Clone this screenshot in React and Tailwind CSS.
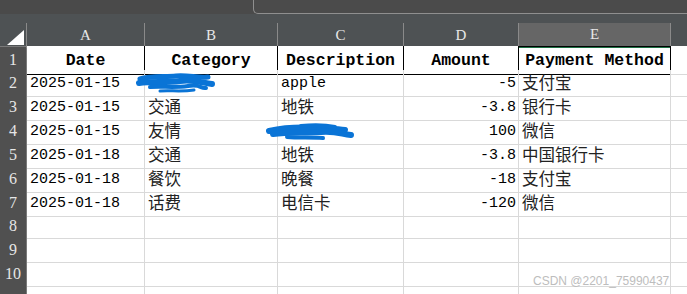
import React from 'react'

const cols = ['A', 'B', 'C', 'D', 'E']
const heads = ['Date', 'Category', 'Description', 'Amount', 'Payment Method']

const rows = [
  ['2025-01-15', '', 'apple', '-5', '支付宝'],
  ['2025-01-15', '交通', '地铁', '-3.8', '银行卡'],
  ['2025-01-15', '友情', '', '100', '微信'],
  ['2025-01-18', '交通', '地铁', '-3.8', '中国银行卡'],
  ['2025-01-18', '餐饮', '晚餐', '-18', '支付宝'],
  ['2025-01-18', '话费', '电信卡', '-120', '微信'],
]

const mono = 'font-["Liberation_Mono","Noto_Sans_CJK_SC",monospace]'
const cjk = 'font-["Noto_Sans_CJK_SC",sans-serif]'
const gridCols = 'grid grid-cols-[27px_118px_133px_126px_115px_152px_1fr]'
const rowHead = "flex items-center justify-center border-r border-b border-[#7a7a7a] bg-[#505050] font-['Liberation_Serif',serif] text-[16px] text-[#e6e6e6]"

function Scribble1() {
  return (
    <svg className="absolute left-[-9px] top-[2px]" width="80" height="22" viewBox="0 0 80 22">
      <g stroke="#0a74d6" fill="none" strokeLinecap="round" strokeLinejoin="round">
        <path d="M4 7 C14 4 28 5 40 4 S62 6 72 5" strokeWidth="5" />
        <path d="M3 11 C16 9 30 11 44 9 S66 11 76 12" strokeWidth="6" />
        <path d="M14 15 C26 14 38 16 52 14 S64 17 70 16" strokeWidth="4" />
        <path d="M24 19 C34 18 44 20 58 18" strokeWidth="3" />
      </g>
    </svg>
  )
}

function Scribble2() {
  return (
    <svg className="absolute left-[-13px] top-[3px]" width="90" height="20" viewBox="0 0 90 20">
      <g stroke="#0a74d6" fill="none" strokeLinecap="round" strokeLinejoin="round">
        <path d="M4 10 C18 7 34 6 50 7 S72 8 80 9" strokeWidth="6" />
        <path d="M8 13 C22 11 40 12 56 11 S76 13 86 14" strokeWidth="6" />
        <path d="M22 16 C34 17 46 16 58 17" strokeWidth="4" />
        <path d="M36 5 C48 4 60 4 70 6" strokeWidth="4" />
      </g>
    </svg>
  )
}

function isCjk(s) {
  return /[\u4e00-\u9fff]/.test(s)
}

export default function App() {
  const extraRows = [8, 9, 10, '']
  return (
    <div className="relative h-[294px] w-[687px] overflow-hidden bg-white">
      {/* title strip */}
      <div className="flex h-[14px] bg-[#4a4a4a]">
        <div className="w-[253px]" />
        <div className="flex-1 rounded-bl-[5px] border-b border-l border-[#8f8f8f] bg-[#4b4b4b]" />
      </div>
      <div className="h-[9px] bg-[#4e5254]" />

      {/* column letters */}
      <div className={`${gridCols} h-[23px] bg-[#4e5254] font-["Liberation_Serif",serif] text-[15px] text-[#e8e8e8]`}>
        <div className="relative border-r border-[#8a8a8a]">
          <div className="absolute right-[2px] bottom-[3px] h-0 w-0 border-b-[15px] border-l-[17px] border-b-white border-l-transparent" />
        </div>
        {cols.map(c => (
          <div
            key={c}
            className={`flex items-center justify-center border-r border-[#8a8a8a] ${c === 'E' ? 'bg-[#666666] border-b-2 border-b-[#1e7145]' : ''}`}
          >
            {c}
          </div>
        ))}
        <div />
      </div>

      {/* header row 1 */}
      <div className={`${gridCols} h-6`}>
        <div className={`${rowHead} border-t`}>1</div>
        {heads.map((h, i) => (
          <div
            key={h}
            className={`flex items-center justify-center border-r border-b border-black pt-[2px] ${i === 4 ? 'border-t' : ''} ${mono} text-[16.5px] font-bold text-black`}
          >
            {h}
          </div>
        ))}
        <div className="border-b border-[#d9d9d9]" />
      </div>

      {rows.map((r, ri) => (
        <div key={ri} className={`${gridCols} h-6`}>
          <div className={rowHead}>{ri + 2}</div>
          {r.map((v, ci) => (
            <div
              key={ci}
              className={`relative flex items-center overflow-visible whitespace-nowrap border-r border-b border-[#d9d9d9] ${ci === 3 ? 'justify-end pr-[2px]' : 'pl-[3px]'} ${isCjk(v) ? `${cjk} text-[16.5px] text-[#222]` : `${mono} pt-[3px] text-[15px] text-black`}`}
            >
              {v}
              {ri === 0 && ci === 1 && <Scribble1 />}
              {ri === 2 && ci === 2 && <Scribble2 />}
            </div>
          ))}
          <div className="border-b border-[#d9d9d9]" />
        </div>
      ))}

      {extraRows.map((n, i) => (
        <div key={i} className={`${gridCols} h-6`}>
          <div className={rowHead}>{n}</div>
          {cols.map(c => (
            <div key={c} className="border-r border-b border-[#d9d9d9]" />
          ))}
          <div className="border-b border-[#d9d9d9]" />
        </div>
      ))}

      <div className="absolute left-[533px] top-[272px] font-['Liberation_Sans',sans-serif] text-[12px] text-[#bdbdbd]">
        CSDN @2201_75990437
      </div>
    </div>
  )
}
